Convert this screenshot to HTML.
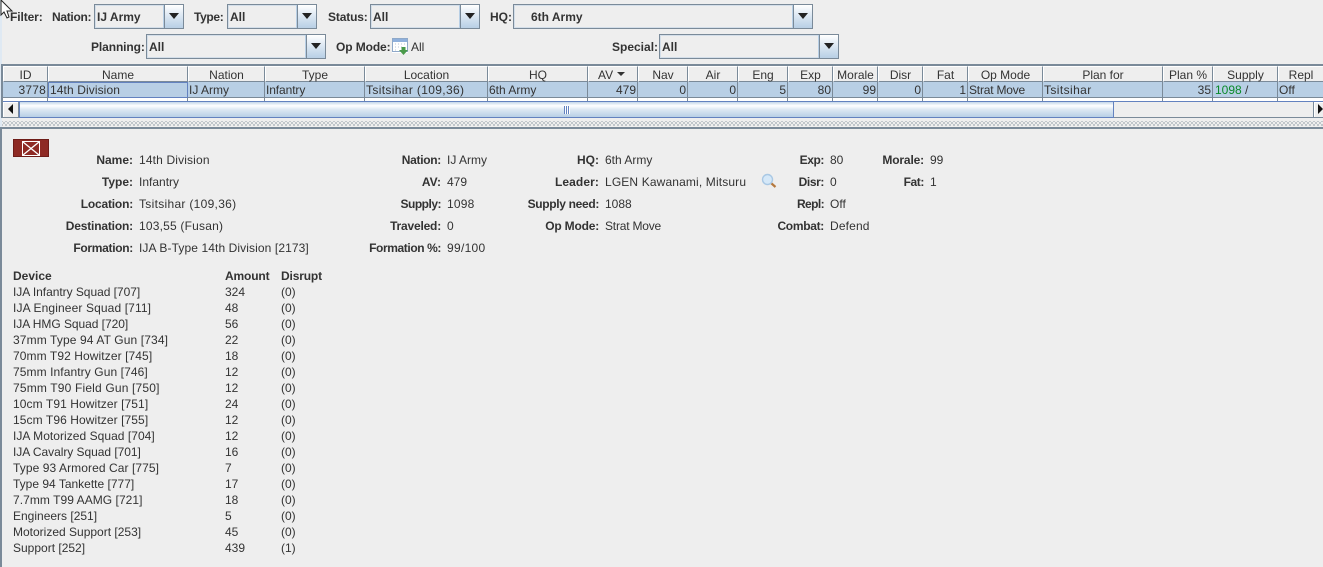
<!DOCTYPE html>
<html><head><meta charset="utf-8"><style>
html,body{margin:0;padding:0}
body{width:1323px;height:567px;overflow:hidden;background:#eee;position:relative;font:12px "Liberation Sans",Arial,sans-serif;color:#333}
div,span{position:absolute;white-space:nowrap;box-sizing:border-box}
.t{height:16px;line-height:16px}
.b{font-weight:bold}
.r{text-align:right}
.c{text-align:center}
.combo{height:25px;border:1px solid #7a8a99;background:#eee;box-shadow:inset 0 0 0 1px #d3dee9}
.combo .txt{left:2px;top:3px;height:16px;line-height:18px;font-weight:bold}
.combo .btn{top:0;bottom:0;right:0;width:19px;background:linear-gradient(#fff 0%,#dde8f3 45%,#b8cfe5 100%);border-left:1px solid #7a8a99;box-shadow:-1px 0 0 #b8cfe5}
.combo .arr{left:4px;top:8px;width:0;height:0;border-left:5px solid transparent;border-right:5px solid transparent;border-top:6px solid #222}
.h{top:66px;height:16px;background:#eee;border-right:1px solid #7a8a99;border-bottom:1px solid #7a8a99;border-left:1px solid #fff;border-top:1px solid #fff;text-align:center;line-height:17px;color:#333}
.d{top:82px;height:16px;background:#b8cfe5;border-right:1px solid #7a8a99;border-bottom:1px solid #7a8a99;line-height:17px;padding:0 1px;color:#333}
.e{top:98px;height:3px;background:#fff;border-right:1px solid #7a8a99}
</style></head><body>
<div style="left:0;top:0;width:2px;height:567px;background:#dfe9f3"></div>

<svg style="position:absolute;left:0;top:0" width="14" height="20"><path d="M1 0 L1 15 L4 12 L7 18 L9 17 L7 11 L12 11 Z" fill="#fff" stroke="#222" stroke-width="1"/></svg>

<div class="t b" style="left:10px;top:9px;letter-spacing:-.1px">Filter:</div>
<div class="t b" style="left:52px;top:9px;letter-spacing:-.3px">Nation:</div>
<div class="combo" style="left:94px;top:4px;width:90px"><div class="txt">IJ Army</div><div class="btn"><div class="arr"></div></div></div>
<div class="t b" style="left:194px;top:9px;letter-spacing:-.35px">Type:</div>
<div class="combo" style="left:227px;top:4px;width:90px"><div class="txt">All</div><div class="btn"><div class="arr"></div></div></div>
<div class="t b" style="left:328px;top:9px;letter-spacing:-.15px">Status:</div>
<div class="combo" style="left:370px;top:4px;width:110px"><div class="txt">All</div><div class="btn"><div class="arr"></div></div></div>
<div class="t b" style="left:490px;top:9px">HQ:</div>
<div class="combo" style="left:513px;top:4px;width:300px"><div class="txt" style="left:17px">6th Army</div><div class="btn"><div class="arr"></div></div></div>

<div class="t b" style="left:91px;top:39px;letter-spacing:-.1px">Planning:</div>
<div class="combo" style="left:146px;top:34px;width:180px"><div class="txt">All</div><div class="btn"><div class="arr"></div></div></div>
<div class="t b" style="left:336px;top:39px;letter-spacing:-.1px">Op Mode:</div>
<svg style="position:absolute;left:392px;top:38px" width="16" height="17"><rect x="0" y="0" width="16" height="15" fill="#fff"/><rect x="0.500" y="0.500" width="15" height="13" fill="#fff" stroke="#8fa9c9"/><rect x="1" y="1" width="14" height="3" fill="#8fb0dc"/><path d="M3 6h1M6 6h1M9 6h1M12 6h1M3 9h1M6 9h1M9 9h1M3 12h1" stroke="#b9c6d6"/><path d="M9.500 9h4v3h2.500l-4.500 5-4.500-5h2.500z" fill="#4a9a4a"/></svg>
<div class="t" style="left:411px;top:39px">All</div>
<div class="t b" style="left:612px;top:39px">Special:</div>
<div class="combo" style="left:659px;top:34px;width:180px"><div class="txt">All</div><div class="btn"><div class="arr"></div></div></div>

<div style="left:1px;top:64px;width:1322px;height:2px;background:#7a8a99"></div>
<div style="left:1px;top:64px;width:2px;height:54px;background:#7a8a99"></div>

<div class="h" style="left:3px;width:45px">ID</div>
<div class="h" style="left:48px;width:140px">Name</div>
<div class="h" style="left:188px;width:77px">Nation</div>
<div class="h" style="left:265px;width:100px">Type</div>
<div class="h" style="left:365px;width:123px">Location</div>
<div class="h" style="left:488px;width:100px">HQ</div>
<div class="h" style="left:588px;width:50px;text-align:left;padding-left:9px">AV<span style="left:28px;top:5px;width:0;height:0;border-left:4px solid transparent;border-right:4px solid transparent;border-top:4px solid #333"></span></div>
<div class="h" style="left:638px;width:50px">Nav</div>
<div class="h" style="left:688px;width:50px">Air</div>
<div class="h" style="left:738px;width:50px">Eng</div>
<div class="h" style="left:788px;width:45px">Exp</div>
<div class="h" style="left:833px;width:45px">Morale</div>
<div class="h" style="left:878px;width:45px">Disr</div>
<div class="h" style="left:923px;width:45px">Fat</div>
<div class="h" style="left:968px;width:75px">Op Mode</div>
<div class="h" style="left:1043px;width:120px">Plan for</div>
<div class="h" style="left:1163px;width:50px">Plan %</div>
<div class="h" style="left:1213px;width:65px">Supply</div>
<div class="h" style="left:1278px;width:45px;border-right:0">Repl</div>

<div class="d r" style="left:3px;width:45px;letter-spacing:.2px">3778</div>
<div class="d" style="left:48px;width:140px;border:1px solid #6382bf;padding:0 1px;line-height:14px;letter-spacing:.1px">14th Division</div>
<div class="d" style="left:188px;width:77px">IJ Army</div>
<div class="d" style="left:265px;width:100px;letter-spacing:-.1px">Infantry</div>
<div class="d" style="left:365px;width:123px;letter-spacing:.35px">Tsitsihar (109,36)</div>
<div class="d" style="left:488px;width:100px">6th Army</div>
<div class="d r" style="left:588px;width:50px">479</div>
<div class="d r" style="left:638px;width:50px">0</div>
<div class="d r" style="left:688px;width:50px">0</div>
<div class="d r" style="left:738px;width:50px">5</div>
<div class="d r" style="left:788px;width:45px">80</div>
<div class="d r" style="left:833px;width:45px">99</div>
<div class="d r" style="left:878px;width:45px">0</div>
<div class="d r" style="left:923px;width:45px">1</div>
<div class="d" style="left:968px;width:75px;letter-spacing:-.2px">Strat Move</div>
<div class="d" style="left:1043px;width:120px;letter-spacing:.4px">Tsitsihar</div>
<div class="d r" style="left:1163px;width:50px">35</div>
<div class="d" style="left:1213px;width:65px;padding-left:2px"><span style="position:static;color:#0a8a2a">1098</span> /</div>
<div class="d" style="left:1278px;width:45px;border-right:0">Off</div>

<div class="e" style="left:3px;width:45px"></div>
<div class="e" style="left:48px;width:140px"></div>
<div class="e" style="left:188px;width:77px"></div>
<div class="e" style="left:265px;width:100px"></div>
<div class="e" style="left:365px;width:123px"></div>
<div class="e" style="left:488px;width:100px"></div>
<div class="e" style="left:588px;width:50px"></div>
<div class="e" style="left:638px;width:50px"></div>
<div class="e" style="left:688px;width:50px"></div>
<div class="e" style="left:738px;width:50px"></div>
<div class="e" style="left:788px;width:45px"></div>
<div class="e" style="left:833px;width:45px"></div>
<div class="e" style="left:878px;width:45px"></div>
<div class="e" style="left:923px;width:45px"></div>
<div class="e" style="left:968px;width:75px"></div>
<div class="e" style="left:1043px;width:120px"></div>
<div class="e" style="left:1163px;width:50px"></div>
<div class="e" style="left:1213px;width:65px"></div>
<div class="e" style="left:1278px;width:45px;border-right:0"></div>

<div style="left:3px;top:101px;width:1320px;height:17px;background:#eee;border-top:1px solid #6382bf;border-bottom:1px solid #7a8a99"></div>
<div style="left:3px;top:102px;width:16px;height:15px;background:#eee;border-right:1px solid #7a8a99;box-shadow:inset 1px 1px 0 #fff"><div style="left:5px;top:2px;width:0;height:0;border-top:5px solid transparent;border-bottom:5px solid transparent;border-right:5px solid #111"></div></div>
<div style="left:19px;top:101px;width:1095px;height:17px;border:1px solid #6382bf;background:linear-gradient(#c5d7ea 0%,#fff 25%,#dde8f3 50%,#b8cfe5 100%)"></div>
<div style="left:564px;top:106px;width:6px;height:8px;background:repeating-linear-gradient(90deg,#6382bf 0 1px,#fff 1px 2px)"></div>
<div style="left:1313px;top:102px;width:10px;height:15px;background:#eee;border-left:1px solid #7a8a99;box-shadow:inset 1px 1px 0 #fff"><div style="left:4px;top:2px;width:0;height:0;border-top:5px solid transparent;border-bottom:5px solid transparent;border-left:5px solid #111"></div></div>

<div style="left:2px;top:121px;width:1321px;height:5px;background-color:#eee;background-image:radial-gradient(#98a2ac 0.7px,transparent 0.9px),radial-gradient(#98a2ac 0.7px,transparent 0.9px);background-size:4px 4px;background-position:0 0,2px 2px"></div>
<div style="left:1px;top:127px;width:1322px;height:2px;background:#7a8a99"></div>
<div style="left:0;top:127px;width:2px;height:440px;background:#7a8a99"></div>

<div style="left:13px;top:139px;width:36px;height:18px;background:#8e2a24;border:1px solid #6e1c18"></div>
<svg style="position:absolute;left:22px;top:141px" width="18" height="15"><rect x="0.500" y="0.500" width="17" height="14" fill="#8e2a24" stroke="#fff"/><path d="M1 1 L17 14 M17 1 L1 14" stroke="#fff" stroke-width="1.300"/></svg>

<div class="t b r" style="left:40px;width:93px;top:152px">Name:</div><div class="t" style="left:139px;top:152px;letter-spacing:.15px">14th Division</div>
<div class="t b r" style="left:40px;width:93px;top:174px">Type:</div><div class="t" style="left:139px;top:174px">Infantry</div>
<div class="t b r" style="left:40px;width:93px;top:196px;letter-spacing:-.2px">Location:</div><div class="t" style="left:139px;top:196px;letter-spacing:.3px">Tsitsihar (109,36)</div>
<div class="t b r" style="left:40px;width:93px;top:218px;letter-spacing:-.17px">Destination:</div><div class="t" style="left:139px;top:218px;letter-spacing:.2px">103,55 (Fusan)</div>
<div class="t b r" style="left:40px;width:93px;top:240px;letter-spacing:-.3px">Formation:</div><div class="t" style="left:139px;top:240px;letter-spacing:.1px">IJA B-Type 14th Division [2173]</div>

<div class="t b r" style="left:341px;width:100px;top:152px;letter-spacing:-.3px">Nation:</div><div class="t" style="left:447px;top:152px">IJ Army</div>
<div class="t b r" style="left:341px;width:100px;top:174px">AV:</div><div class="t" style="left:447px;top:174px">479</div>
<div class="t b r" style="left:341px;width:100px;top:196px;letter-spacing:-.5px">Supply:</div><div class="t" style="left:447px;top:196px;letter-spacing:.2px">1098</div>
<div class="t b r" style="left:341px;width:100px;top:218px;letter-spacing:-.2px">Traveled:</div><div class="t" style="left:447px;top:218px">0</div>
<div class="t b r" style="left:341px;width:100px;top:240px;letter-spacing:-.4px">Formation %:</div><div class="t" style="left:447px;top:240px;letter-spacing:.3px">99/100</div>

<div class="t b r" style="left:499px;width:100px;top:152px">HQ:</div><div class="t" style="left:605px;top:152px">6th Army</div>
<div class="t b r" style="left:499px;width:100px;top:174px;letter-spacing:.1px">Leader:</div><div class="t" style="left:605px;top:174px;letter-spacing:.14px">LGEN Kawanami, Mitsuru</div>
<div class="t b r" style="left:499px;width:100px;top:196px;letter-spacing:-.33px">Supply need:</div><div class="t" style="left:605px;top:196px">1088</div>
<div class="t b r" style="left:499px;width:100px;top:218px;letter-spacing:-.2px">Op Mode:</div><div class="t" style="left:605px;top:218px;letter-spacing:-.2px">Strat Move</div>
<svg style="position:absolute;left:761px;top:173px" width="16" height="16"><path d="M10 10 L14.500 14" stroke="#b5793f" stroke-width="2.200"/><circle cx="6.500" cy="6.500" r="5" fill="#d5e8f8" stroke="#a9c8e4" stroke-width="1.400"/></svg>

<div class="t b r" style="left:744px;width:80px;top:152px;letter-spacing:-.4px">Exp:</div><div class="t" style="left:830px;top:152px">80</div>
<div class="t b r" style="left:744px;width:80px;top:174px;letter-spacing:-.4px">Disr:</div><div class="t" style="left:830px;top:174px">0</div>
<div class="t b r" style="left:744px;width:80px;top:196px;letter-spacing:-.6px">Repl:</div><div class="t" style="left:830px;top:196px">Off</div>
<div class="t b r" style="left:744px;width:80px;top:218px;letter-spacing:-.3px">Combat:</div><div class="t" style="left:830px;top:218px;letter-spacing:.15px">Defend</div>
<div class="t b r" style="left:864px;width:60px;top:152px;letter-spacing:-.15px">Morale:</div><div class="t" style="left:930px;top:152px">99</div>
<div class="t b r" style="left:864px;width:60px;top:174px;letter-spacing:-.4px">Fat:</div><div class="t" style="left:930px;top:174px">1</div>

<div class="t b" style="left:13px;top:268px">Device</div><div class="t b" style="left:225px;top:268px;letter-spacing:-.15px">Amount</div><div class="t b" style="left:281px;top:268px;letter-spacing:-.15px">Disrupt</div>
<div class="t" style="left:13px;top:284px;letter-spacing:-.04px">IJA Infantry Squad [707]</div><div class="t" style="left:225px;top:284px">324</div><div class="t" style="left:281px;top:284px">(0)</div>
<div class="t" style="left:13px;top:300px;letter-spacing:.12px">IJA Engineer Squad [711]</div><div class="t" style="left:225px;top:300px">48</div><div class="t" style="left:281px;top:300px">(0)</div>
<div class="t" style="left:13px;top:316px;letter-spacing:-.05px">IJA HMG Squad [720]</div><div class="t" style="left:225px;top:316px">56</div><div class="t" style="left:281px;top:316px">(0)</div>
<div class="t" style="left:13px;top:332px;letter-spacing:.12px">37mm Type 94 AT Gun [734]</div><div class="t" style="left:225px;top:332px">22</div><div class="t" style="left:281px;top:332px">(0)</div>
<div class="t" style="left:13px;top:348px;letter-spacing:.09px">70mm T92 Howitzer [745]</div><div class="t" style="left:225px;top:348px">18</div><div class="t" style="left:281px;top:348px">(0)</div>
<div class="t" style="left:13px;top:364px;letter-spacing:.09px">75mm Infantry Gun [746]</div><div class="t" style="left:225px;top:364px">12</div><div class="t" style="left:281px;top:364px">(0)</div>
<div class="t" style="left:13px;top:380px;letter-spacing:.17px">75mm T90 Field Gun [750]</div><div class="t" style="left:225px;top:380px">12</div><div class="t" style="left:281px;top:380px">(0)</div>
<div class="t" style="left:13px;top:396px;letter-spacing:.09px">10cm T91 Howitzer [751]</div><div class="t" style="left:225px;top:396px">24</div><div class="t" style="left:281px;top:396px">(0)</div>
<div class="t" style="left:13px;top:412px;letter-spacing:.09px">15cm T96 Howitzer [755]</div><div class="t" style="left:225px;top:412px">12</div><div class="t" style="left:281px;top:412px">(0)</div>
<div class="t" style="left:13px;top:428px;letter-spacing:.04px">IJA Motorized Squad [704]</div><div class="t" style="left:225px;top:428px">12</div><div class="t" style="left:281px;top:428px">(0)</div>
<div class="t" style="left:13px;top:444px;letter-spacing:-.04px">IJA Cavalry Squad [701]</div><div class="t" style="left:225px;top:444px">16</div><div class="t" style="left:281px;top:444px">(0)</div>
<div class="t" style="left:13px;top:460px;letter-spacing:.08px">Type 93 Armored Car [775]</div><div class="t" style="left:225px;top:460px">7</div><div class="t" style="left:281px;top:460px">(0)</div>
<div class="t" style="left:13px;top:476px">Type 94 Tankette [777]</div><div class="t" style="left:225px;top:476px">17</div><div class="t" style="left:281px;top:476px">(0)</div>
<div class="t" style="left:13px;top:492px;letter-spacing:.05px">7.7mm T99 AAMG [721]</div><div class="t" style="left:225px;top:492px">18</div><div class="t" style="left:281px;top:492px">(0)</div>
<div class="t" style="left:13px;top:508px">Engineers [251]</div><div class="t" style="left:225px;top:508px">5</div><div class="t" style="left:281px;top:508px">(0)</div>
<div class="t" style="left:13px;top:524px">Motorized Support [253]</div><div class="t" style="left:225px;top:524px">45</div><div class="t" style="left:281px;top:524px">(0)</div>
<div class="t" style="left:13px;top:540px">Support [252]</div><div class="t" style="left:225px;top:540px">439</div><div class="t" style="left:281px;top:540px">(1)</div>
</body></html>
